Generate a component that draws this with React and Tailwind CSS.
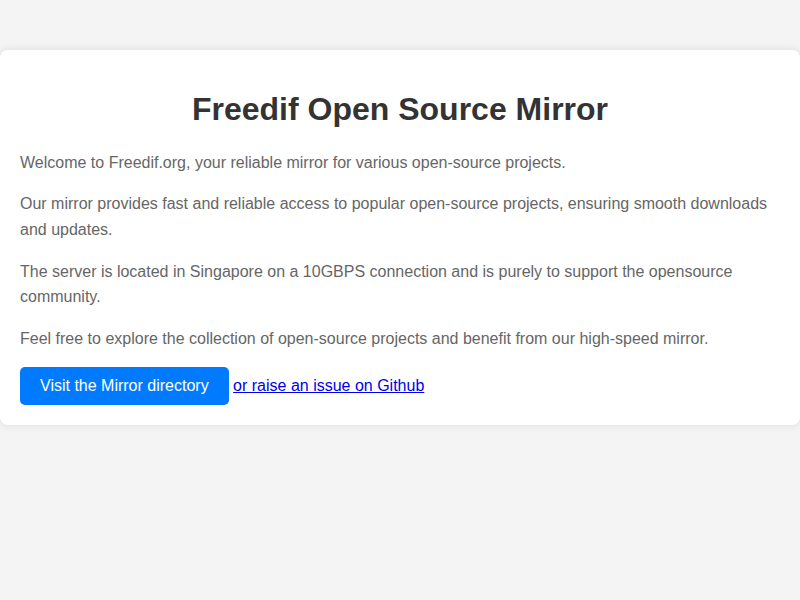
export default function App() {
  return (
    <div className="min-h-[600px] bg-[#f4f4f4] pt-[50px] font-['Liberation_Sans',Arial,sans-serif]">
      <div className="mx-auto max-w-[800px] rounded-lg bg-white p-5 shadow-[0_0_10px_rgba(0,0,0,0.1)]">
        <h1 className="my-[21.44px] text-center text-[32px] font-bold leading-[normal] text-[#333]">
          Freedif Open Source Mirror
        </h1>
        <p className="my-4 text-base leading-[1.6] text-[#666]">
          Welcome to Freedif.org, your reliable mirror for various open-source projects.
        </p>
        <p className="my-4 text-base leading-[1.6] text-[#666]">
          Our mirror provides fast and reliable access to popular open-source projects, ensuring smooth downloads and updates.
        </p>
        <p className="my-4 text-base leading-[1.6] text-[#666]">
          The server is located in Singapore on a 10GBPS connection and is purely to support the opensource community.
        </p>
        <p className="mt-4 mb-4 text-base leading-[1.6] text-[#666]">
          Feel free to explore the collection of open-source projects and benefit from our high-speed mirror.
        </p>
        <div className="text-base leading-[normal]">
          <a href="#" className="inline-block rounded-[5px] bg-[#007bff] px-5 py-2.5 text-white">
            Visit the Mirror directory
          </a>{' '}
          <a href="#" className="text-[#0000ee] underline">
            or raise an issue on Github
          </a>
        </div>
      </div>
    </div>
  );
}
